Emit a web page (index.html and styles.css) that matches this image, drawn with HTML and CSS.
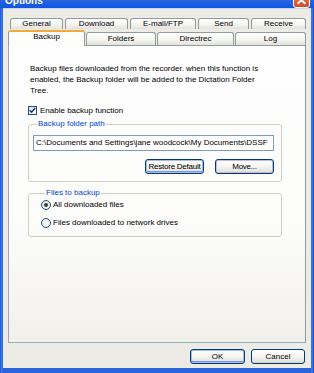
FILE: index.html
```html
<!DOCTYPE html>
<html>
<head>
<meta charset="utf-8">
<link rel="stylesheet" href="styles.css">
</head>
<body>
<div class="window">
  <div class="titlebar">
    <span class="title">Options</span>
    <span class="close"><svg width="16" height="16" viewBox="0 0 16 16"><path d="M4.5 4.5 L11.5 11.5 M11.5 4.5 L4.5 11.5" stroke="#fff" stroke-width="2" stroke-linecap="square"/></svg></span>
  </div>
  <div class="client">
    <div class="tabs row1">
      <div class="tab t-general">General</div>
      <div class="tab t-download">Download</div>
      <div class="tab t-email">E-mail/FTP</div>
      <div class="tab t-send">Send</div>
      <div class="tab t-receive">Receive</div>
    </div>
    <div class="tabs row2">
      <div class="tab selected t-backup">Backup</div>
      <div class="tab t-folders">Folders</div>
      <div class="tab t-directrec">Directrec</div>
      <div class="tab t-log">Log</div>
    </div>
    <div class="panel">
      <p class="desc">Backup files downloaded from the recorder. when this function is enabled, the Backup folder will be added to the Dictation Folder Tree.</p>
      <div class="check"><span class="box"><svg width="7" height="7" viewBox="0 0 7 7"><path d="M0.8 3.2 L2.6 5.2 L6.2 1" fill="none" stroke="#1f2f6a" stroke-width="1.4"/></svg></span>Enable backup function</div>
      <fieldset class="group g1">
        <legend>Backup folder path</legend>
        <div class="field">C:\Documents and Settings\jane woodcock\My Documents\DSSF</div>
        <div class="btnrow">
          <div class="btn focus">Restore Default</div>
          <div class="btn hot">Move...</div>
        </div>
      </fieldset>
      <fieldset class="group g2">
        <legend>Files to backup</legend>
        <div class="radio"><span class="dot on"></span>All downloaded files</div>
        <div class="radio"><span class="dot"></span>Files downloaded to network drives</div>
      </fieldset>
    </div>
    <div class="footer">
      <div class="btn focus w-ok">OK</div>
      <div class="btn w-cancel">Cancel</div>
    </div>
  </div>
</div>
</body>
</html>
```

FILE: styles.css
```css
* { box-sizing: border-box; }
html, body { margin: 0; padding: 0; }
body {
  width: 314px;
  height: 373px;
  overflow: hidden;
  font-family: "Liberation Sans", Arial, sans-serif;
  font-size: 8px;
  color: #000;
}
.window {
  width: 314px;
  height: 373px;
  display: flex;
  flex-direction: column;
  background: linear-gradient(90deg, #0a3fc9 0, #3f7ce8 1px, #2a63dc 3px, #2a63dc 311px, #4a84ea 312px, #0a3fc9 314px);
  padding: 0 3px 5px 3px;
}
.titlebar {
  height: 8px;
  margin: 0 -3px;
  background: linear-gradient(#2c64dc, #0c56e4);
  display: flex;
  justify-content: space-between;
  overflow: hidden;
  padding: 0 4px 0 5px;
}
.title {
  color: #fff;
  font-weight: bold;
  font-size: 10px;
  line-height: 10px;
  margin-top: -4px;
}
.close {
  width: 17px;
  height: 17px;
  margin-top: -9px;
  border: 1px solid #fff;
  border-radius: 3px;
  background: linear-gradient(#e88a67, #d5461f);
  display: flex;
  align-items: center;
  justify-content: center;
}
.client {
  flex: 1;
  background: #ecebe6;
  border-top: 1px solid #c9d7f0;
  display: flex;
  flex-direction: column;
  padding: 9px 5px 0 5px;
}
.tabs { display: flex; }
.row1 { gap: 2px; padding-left: 2px; height: 12px; }
.row2 { gap: 1px; height: 15px; align-items: flex-end; position: relative; z-index: 2; }
.tab {
  height: 11px;
  border: 1px solid #919b9c;
  border-bottom: none;
  border-radius: 3px 3px 0 0;
  background: linear-gradient(#ffffff, #f3f3ef 60%, #e3e2da);
  text-align: center;
  line-height: 10px;
  white-space: nowrap;
}
.row1 .tab { height: 11px; align-self: flex-start; }
.row2 .tab { height: 13px; line-height: 12px; }
.row2 .tab.selected {
  height: 16px;
  margin-bottom: -1px;
  background: #fdfdfc;
  border-top: 2px solid #f4a93a;
  line-height: 10px;
}
.t-general { width: 53px; }
.t-download { width: 63px; }
.t-email { width: 66px; }
.t-send { width: 51px; }
.t-receive { width: 55px; }
.t-backup { width: 77px; }
.t-folders { width: 70px; }
.t-directrec { width: 77px; }
.t-log { width: 71px; }

.panel {
  height: 298px;
  border: 1px solid #919b9c;
  border-bottom-color: #8db4b7;
  border-left-color: #a3a3c0;
  background: linear-gradient(#fefefe 0, #fcfcfb 60%, #f1f0eb 100%);
  padding: 17px 23px 0 19px;
  display: flex;
  flex-direction: column;
}
.desc {
  margin: 0 0 0 2px;
  line-height: 11px;
  width: 240px;
}
.check {
  display: flex;
  align-items: center;
  margin-top: 10px;
  height: 9px;
  line-height: 9px;
}
.box {
  width: 9px;
  height: 9px;
  border: 1px solid #1c5180;
  background: linear-gradient(135deg, #dcdcd7, #fff);
  display: flex;
  align-items: center;
  justify-content: center;
  margin-right: 3px;
}
.group {
  margin: 0;
  border: 1px solid #d0d0bf;
  border-radius: 3px;
  min-width: 0;
}
.group legend {
  color: #0046d5;
  padding: 0 1px;
  margin-left: 4px;
  line-height: 10px;
}
.g1 { margin-top: 4px; padding: 6px 7px 7px 4px; }
.field {
  height: 16px;
  border: 1px solid #7f9db9;
  background: #fff;
  white-space: nowrap;
  overflow: hidden;
  line-height: 14px;
  padding-left: 2px;
}
.btnrow {
  display: flex;
  justify-content: flex-end;
  gap: 11px;
  margin-top: 8px;
}
.btn {
  height: 15px;
  border: 1px solid #003c74;
  border-radius: 3px;
  background: linear-gradient(#ffffff, #f4f4f0 50%, #e6e5de 85%, #d6d0c5);
  text-align: center;
  line-height: 13px;
  white-space: nowrap;
  overflow: hidden;
}
.btnrow .btn { width: 59px; letter-spacing: -0.25px; }
.btn.focus { box-shadow: inset 0 0 0 1px #a9bde8, inset 0 -1px 0 1px #7c97dc; }
.btn.hot { box-shadow: inset 0 0 0 1px #c6b8e2; }
.g2 { margin-top: 6px; padding: 2px 6px 8px 12px; }
.radio {
  display: flex;
  align-items: center;
  height: 10px;
  line-height: 10px;
}
.radio + .radio { margin-top: 8px; }
.dot {
  width: 10px;
  height: 10px;
  border: 1px solid #1c5180;
  border-radius: 50%;
  background: radial-gradient(circle at 60% 60%, #fff, #dcdcd7);
  margin-right: 2px;
  display: flex;
  align-items: center;
  justify-content: center;
}
.dot.on::after {
  content: "";
  width: 4px;
  height: 4px;
  border-radius: 50%;
  background: #3b3b3b;
}
.footer {
  display: flex;
  justify-content: flex-end;
  gap: 6px;
  padding: 6px 1px 0 0;
}
.w-ok { width: 55px; }
.w-cancel { width: 54px; }
```
